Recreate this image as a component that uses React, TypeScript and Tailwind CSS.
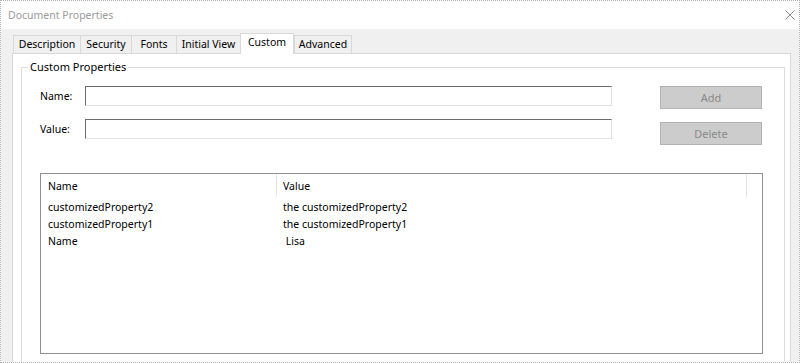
const tabs = ['Description', 'Security', 'Fonts', 'Initial View', 'Custom', 'Advanced']
const tabWidths: Record<string, string> = {
  Description: 'w-[67px]',
  Security: 'w-[51px]',
  Fonts: 'w-[45px]',
  'Initial View': 'w-[64px]',
  Custom: 'w-[54px]',
  Advanced: 'w-[58px]',
}

const rows = [
  ['customizedProperty2', 'the customizedProperty2'],
  ['customizedProperty1', 'the customizedProperty1'],
  ['Name', ' Lisa'],
]

export default function App() {
  return (
    <div className="w-[800px] h-[363px] overflow-hidden bg-white border border-dotted border-[#b0b0b0] flex flex-col font-['Noto_Sans',sans-serif] text-[10.5px] text-black">
      {/* Title bar */}
      <div className="h-[28px] shrink-0 flex items-center justify-between pl-[7px] pr-[4px] pt-[2px]">
        <span className="text-[10.5px] text-[#9b9b9b]">Document Properties</span>
        <svg width="10" height="10" viewBox="0 0 10 10" className="text-[#8a8a8a] -mt-[2px]">
          <path d="M0.5 0.5 L9.5 9.5 M9.5 0.5 L0.5 9.5" stroke="currentColor" strokeWidth="1" />
        </svg>
      </div>

      {/* Body */}
      <div className="flex-1 bg-[#f0f0f0] pl-[11px] pr-[8px] pt-[4px] flex flex-col">
        {/* Tabs */}
        <div className="h-[20px] flex items-end ml-[1px] relative z-10">
          {tabs.map((t) => {
            const active = t === 'Custom'
            return (
              <div
                key={t}
                className={
                  active
                    ? `${tabWidths[t]} h-[21px] -mb-[1px] bg-white border border-b-0 border-[#d9d9d9] flex items-center justify-center pb-[2px]`
                    : `${tabWidths[t]} h-[18px] bg-[#f0f0f0] border-t border-l border-[#d9d9d9] last:border-r flex items-center justify-center pt-[1px]`
                }
              >
                {t}
              </div>
            )
          })}
        </div>

        {/* Panel */}
        <div className="flex-1 bg-white border border-b-0 border-[#d9d9d9] pl-[8px] pr-[5px] pt-[5px]">
          <fieldset className="border border-[#dcdcdc] pl-[6px] pr-[21px] pt-[11px] h-[400px]">
            <legend className="px-[2px] leading-[16px] text-[11px]">Custom Properties</legend>

            <div className="pl-[12px]">
              <div className="flex">
                <div className="flex flex-col gap-[13px]">
                  <div className="flex items-center">
                    <span className="w-[45px] pt-[2px]">Name:</span>
                    <div className="w-[527px] h-[20px] bg-white border border-t-[#6b6b6b] border-l-[#6b6b6b] border-r-[#e3e3e3] border-b-[#e3e3e3]" />
                  </div>
                  <div className="flex items-center">
                    <span className="w-[45px] pt-[2px]">Value:</span>
                    <div className="w-[527px] h-[20px] bg-white border border-t-[#6b6b6b] border-l-[#6b6b6b] border-r-[#e3e3e3] border-b-[#e3e3e3]" />
                  </div>
                </div>
                <div className="ml-[48px] flex flex-col gap-[13px]">
                  <div className="w-[102px] h-[23px] bg-[#cccccc] border border-[#b3b3b3] flex items-center justify-center text-[#8a8a8a] text-[11px] pt-[2px]">
                    Add
                  </div>
                  <div className="w-[102px] h-[23px] bg-[#cccccc] border border-[#b3b3b3] flex items-center justify-center text-[#8a8a8a] text-[11px] pt-[2px]">
                    Delete
                  </div>
                </div>
              </div>

              {/* List */}
              <div className="mt-[28px] w-[723px] h-[181px] border border-[#8e8f96] bg-white">
                <div className="h-[23px] flex items-center">
                  <div className="w-[236px] h-full pl-[7px] pt-[2px] flex items-center border-r border-[#e5e5e5]">Name</div>
                  <div className="w-[470px] h-full pl-[6px] pt-[2px] flex items-center border-r border-[#e5e5e5]">Value</div>
                </div>
                <div className="pt-[1px]">
                  {rows.map(([n, v]) => (
                    <div key={n} className="h-[17px] flex items-center pt-[2px]">
                      <div className="w-[236px] pl-[7px]">{n}</div>
                      <div className="pl-[6px] whitespace-pre">{v}</div>
                    </div>
                  ))}
                </div>
              </div>
            </div>
          </fieldset>
        </div>
      </div>
    </div>
  )
}
